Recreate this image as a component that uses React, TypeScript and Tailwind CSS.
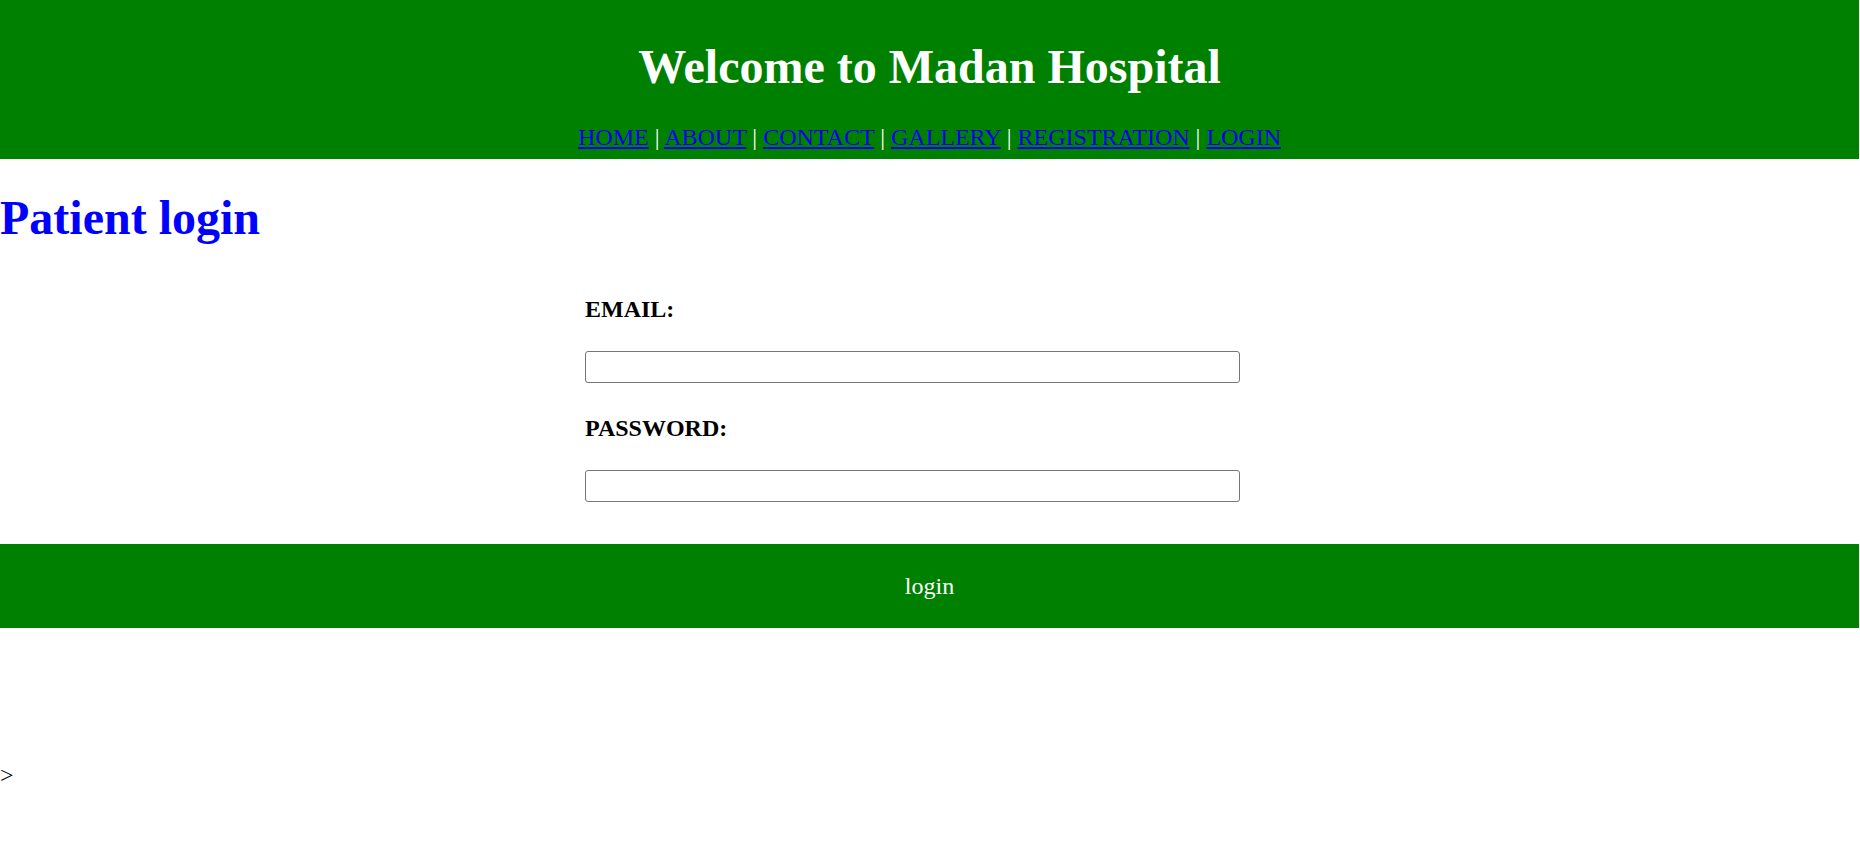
import React from "react";

const links = ["HOME", "ABOUT", "CONTACT", "GALLERY", "REGISTRATION", "LOGIN"];

export default function App() {
  return (
    <div className="min-h-[843px] bg-white font-['Liberation_Serif','Times_New_Roman',serif] text-black">
      <header className="w-[1859px] bg-[#008000] text-center pt-[39px] pb-[8px]">
        <h1 className="text-[48px] leading-[55px] font-bold text-white">Welcome to Madan Hospital</h1>
        <nav className="mt-[29px] text-[24px] leading-[28px] text-white">
          {links.map((l, i) => (
            <React.Fragment key={l}>
              {i > 0 && <span> | </span>}
              <a href="#" className="text-[#0000ee] underline">{l}</a>
            </React.Fragment>
          ))}
        </nav>
      </header>

      <h1 className="mt-[31px] text-[48px] leading-[55px] font-bold text-[#0000ff]">Patient login</h1>

      <form className="ml-[585px] w-[655px] mt-[50px]" onSubmit={(e) => e.preventDefault()}>
        <div className="text-[24px] leading-[28px] font-bold">EMAIL:</div>
        <input
          type="email"
          className="block mt-[28px] w-[655px] h-[32px] border border-[#767676] rounded-[3px] bg-white"
        />
        <div className="mt-[31px] text-[24px] leading-[28px] font-bold">PASSWORD:</div>
        <input
          type="password"
          className="block mt-[28px] w-[655px] h-[32px] border border-[#767676] rounded-[3px] bg-white"
        />
      </form>

      <button className="mt-[42px] block w-[1859px] h-[84px] bg-[#008000] text-white text-[24px] leading-[28px] font-['Liberation_Serif','Times_New_Roman',serif]">
        login
      </button>

      <div className="mt-[133px] text-[24px] leading-[28px]">&gt;</div>
    </div>
  );
}
